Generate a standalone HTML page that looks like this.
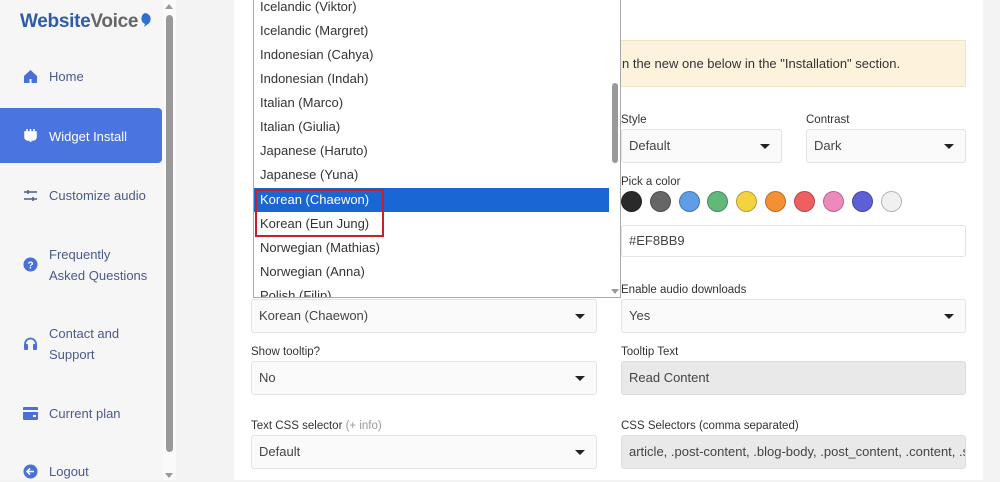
<!DOCTYPE html>
<html><head><meta charset="utf-8"><style>
*{margin:0;padding:0;box-sizing:border-box}
body{width:1000px;height:480px;overflow:hidden;background:#f3f3f4;font-family:"Liberation Sans",sans-serif;position:relative;color:#333}
.abs{position:absolute}
#side{left:0;top:0;width:163px;height:480px;background:#f6f6f7}
.logo{left:20px;top:11px;font-size:19px;font-weight:bold;letter-spacing:-0.3px}
.nav{left:49px;font-size:13px;color:#4a5a8a;line-height:21px}
.ic{left:23px;width:15px;height:15px}
#active{left:0;top:108px;width:162px;height:55px;background:#4a74df;border-radius:0 4px 4px 0}
#track{left:163px;top:0;width:13px;height:480px;background:#fafafa}
#thumb{left:166px;top:15px;width:7px;height:437px;background:#999;border-radius:4px}
#card{left:234px;top:0;width:749px;height:480px;background:#fff}
#banner{left:253px;top:40px;width:713px;height:47px;background:#fdf3dc;border:1px solid #efe3c3;font-size:13px;line-height:46px;color:#333}
.lbl{font-size:11.5px;color:#333}
.fld{height:34px;border:1px solid #e3e3e3;border-radius:3px;background:#fafafa;font-size:13px;line-height:32px;padding-left:7px;color:#444}
.fld.dis{background:#e9e9e9;border-color:#ddd}
.arr{position:absolute;right:11px;top:14px;width:0;height:0;border-left:5px solid transparent;border-right:5px solid transparent;border-top:5px solid #222}
#list{left:253px;top:0;width:368px;height:298px;background:#fff;border:1px solid #aaa;border-top:none;overflow:hidden}
.it{position:absolute;left:0;width:355px;height:24px;font-size:13px;line-height:24px;padding-left:6px;color:#333}
.sel{background:#1a66d2;color:#fff}
.dot{position:absolute;top:191px;width:21px;height:21px;border-radius:50%;border:1px solid rgba(0,0,0,.25)}
</style></head><body>
<div id="side" class="abs"></div>
<div class="abs logo"><span style="color:#2c5da6">Website</span><span style="color:#666">Voice</span><svg width="14" height="16" viewBox="0 0 14 16" style="vertical-align:-1px"><path d="M7 1a6 6 0 0 1 3 11l-4 3 1-3A6 6 0 0 1 7 1z" fill="#2f6fd0"/></svg></div>
<div id="active" class="abs"></div>
<svg class="abs ic" style="top:69px" viewBox="0 0 15 15"><path d="M1 7L7.5 1 14 7v7H1z" fill="#4a6fd6"/><rect x="6.5" y="10" width="2" height="4" fill="#f6f6f7"/></svg>
<div class="abs nav" style="top:66px">Home</div>
<svg class="abs ic" style="top:128px" viewBox="0 0 15 15"><path d="M4 1v3M7.5 1v3M11 1v3M2 4h11v5a3 3 0 0 1-3 3H5a3 3 0 0 1-3-3z" stroke="#fff" stroke-width="1.6" fill="#fff"/><path d="M7.5 12v2" stroke="#fff" stroke-width="1.6"/></svg>
<div class="abs nav" style="top:126px;color:#fff">Widget Install</div>
<svg class="abs ic" style="top:188px" viewBox="0 0 15 15"><path d="M1 4h13M1 11h13" stroke="#4a5a8a" stroke-width="1.5"/><path d="M5 2v4M10 9v4" stroke="#4a5a8a" stroke-width="1.5"/></svg>
<div class="abs nav" style="top:185px">Customize audio</div>
<svg class="abs ic" style="top:257px" viewBox="0 0 15 15"><circle cx="7.5" cy="7.5" r="7" fill="#4a6fd6"/><text x="7.5" y="11.5" font-size="10" font-weight="bold" fill="#fff" text-anchor="middle" font-family="Liberation Sans">?</text></svg>
<div class="abs nav" style="top:244px">Frequently<br>Asked Questions</div>
<svg class="abs ic" style="top:336px" viewBox="0 0 15 15"><path d="M2 11V8a5.5 5.5 0 0 1 11 0v3" stroke="#4a6fd6" stroke-width="1.8" fill="none"/><rect x="1" y="8" width="4" height="6" rx="1" fill="#4a6fd6"/><rect x="10" y="8" width="4" height="6" rx="1" fill="#4a6fd6"/></svg>
<div class="abs nav" style="top:323px">Contact and<br>Support</div>
<svg class="abs ic" style="top:406px" viewBox="0 0 15 15"><rect x="0" y="1" width="15" height="13" rx="1" fill="#4a6fd6"/><rect x="0" y="4" width="15" height="2" fill="#f6f6f7"/><rect x="10" y="9" width="3" height="2" fill="#f6f6f7"/></svg>
<div class="abs nav" style="top:403px">Current plan</div>
<svg class="abs ic" style="top:464px" viewBox="0 0 15 15"><circle cx="7.5" cy="7.5" r="7" fill="#4a6fd6"/><path d="M11 7.5H4M7 4.5l-3 3 3 3" stroke="#fff" stroke-width="1.6" fill="none"/></svg>
<div class="abs nav" style="top:461px">Logout</div>
<div id="track" class="abs"></div>
<div id="thumb" class="abs"></div>
<div class="abs" style="left:165px;top:4px;border-left:4px solid transparent;border-right:4px solid transparent;border-bottom:5px solid #999"></div>
<div class="abs" style="left:165px;top:473px;border-left:4px solid transparent;border-right:4px solid transparent;border-top:5px solid #999"></div>

<div id="card" class="abs"></div>
<div id="banner" class="abs"><span style="position:absolute;left:368px;white-space:nowrap">n the new one below in the "Installation" section.</span></div>

<div class="abs lbl" style="left:621px;top:114px">Style</div>
<div class="abs lbl" style="left:806px;top:114px">Contrast</div>
<div class="abs fld" style="left:621px;top:129px;width:161px">Default<span class="arr"></span></div>
<div class="abs fld" style="left:806px;top:129px;width:160px">Dark<span class="arr"></span></div>
<div class="abs lbl" style="left:621px;top:176px">Pick a color</div>
<div class="dot" style="left:621px;background:#2a2a2a"></div>
<div class="dot" style="left:650px;background:#666"></div>
<div class="dot" style="left:679px;background:#5f9de6"></div>
<div class="dot" style="left:707px;background:#62b77a"></div>
<div class="dot" style="left:736px;background:#f5d340"></div>
<div class="dot" style="left:765px;background:#f39034"></div>
<div class="dot" style="left:794px;background:#ee5f61"></div>
<div class="dot" style="left:823px;background:#ec8bbb"></div>
<div class="dot" style="left:852px;background:#5d5fd4"></div>
<div class="dot" style="left:881px;background:#f0f0f0"></div>
<div class="abs fld" style="left:621px;top:225px;width:345px;height:32px;background:#fff;line-height:30px">#EF8BB9</div>
<div class="abs lbl" style="left:621px;top:284px">Enable audio downloads</div>
<div class="abs fld" style="left:251px;top:299px;width:346px">Korean (Chaewon)<span class="arr"></span></div>
<div class="abs fld" style="left:621px;top:299px;width:345px">Yes<span class="arr"></span></div>
<div class="abs lbl" style="left:251px;top:346px">Show tooltip?</div>
<div class="abs lbl" style="left:621px;top:346px">Tooltip Text</div>
<div class="abs fld" style="left:251px;top:361px;width:346px">No<span class="arr"></span></div>
<div class="abs fld dis" style="left:621px;top:361px;width:345px">Read Content</div>
<div class="abs lbl" style="left:251px;top:420px">Text CSS selector <span style="color:#999">(+ info)</span></div>
<div class="abs lbl" style="left:621px;top:420px">CSS Selectors (comma separated)</div>
<div class="abs fld" style="left:251px;top:435px;width:346px">Default<span class="arr"></span></div>
<div class="abs fld dis" style="left:621px;top:435px;width:345px;overflow:hidden;white-space:nowrap">article, .post-content, .blog-body, .post_content, .content, .se</div>

<div id="list" class="abs">
<div class="it" style="top:-5px">Icelandic (Viktor)</div>
<div class="it" style="top:19px">Icelandic (Margret)</div>
<div class="it" style="top:43px">Indonesian (Cahya)</div>
<div class="it" style="top:67px">Indonesian (Indah)</div>
<div class="it" style="top:91px">Italian (Marco)</div>
<div class="it" style="top:115px">Italian (Giulia)</div>
<div class="it" style="top:139px">Japanese (Haruto)</div>
<div class="it" style="top:163px">Japanese (Yuna)</div>
<div class="it sel" style="top:188px">Korean (Chaewon)</div>
<div class="it" style="top:212px">Korean (Eun Jung)</div>
<div class="it" style="top:236px">Norwegian (Mathias)</div>
<div class="it" style="top:260px">Norwegian (Anna)</div>
<div class="it" style="top:284px">Polish (Filip)</div>
<div style="position:absolute;left:355px;top:0;width:13px;height:298px;background:#fff"></div>
<div style="position:absolute;left:358px;top:83px;width:6px;height:80px;background:#999;border-radius:3px"></div>
<div style="position:absolute;left:357px;top:289px;border-left:4px solid transparent;border-right:4px solid transparent;border-top:5px solid #999"></div>
</div>
<div class="abs" style="left:255px;top:189px;width:129px;height:48px;border:2px solid #c8202a"></div>
</body></html>
